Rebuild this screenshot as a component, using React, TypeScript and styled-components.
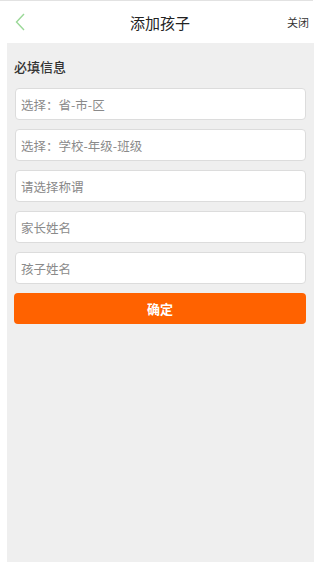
import React from 'react';
import styled, { createGlobalStyle } from 'styled-components';

const GlobalStyle = createGlobalStyle`
  html, body {
    margin: 0;
    padding: 0;
    background: #fff;
    font-family: "Noto Sans CJK SC", "Liberation Sans", sans-serif;
  }
`

const Page = styled.div`
  width: 320px;
  min-height: 562px;
  display: flex;
  flex-direction: column;
  background: #fff;
`

const Header = styled.div`
  width: 313px;
  height: 42px;
  border-top: 1px solid #e2e2e2;
  display: grid;
  grid-template-columns: 64px 1fr 57px;
  align-items: center;
`

const Back = styled.div`
  padding-left: 15px;
  display: flex;
  align-items: center;
`

const Title = styled.div`
  text-align: center;
  font-size: 15px;
  color: #222;
`

const Close = styled.div`
  text-align: right;
  font-size: 11px;
  color: #333;
  padding-right: 4px;
`

const Panel = styled.div`
  margin: 0 6px 0 7px;
  min-height: 519px;
  background: #efefef;
  padding: 14px 8px 0 7px;
  box-sizing: border-box;
  display: flex;
  flex-direction: column;
`

const Section = styled.div`
  font-size: 13px;
  font-weight: 500;
  color: #333;
  line-height: 20px;
  margin-bottom: 11px;
`

const Fields = styled.div`
  display: flex;
  flex-direction: column;
  gap: 9px;
  padding-left: 1px;
`

const Field = styled.div`
  height: 32px;
  box-sizing: border-box;
  background: #fff;
  border: 1px solid #dcdcdc;
  border-radius: 4px;
  display: flex;
  align-items: center;
  padding-left: 5px;
  font-size: 12.5px;
  color: #8a8a8a;
`

const Submit = styled.div`
  margin-top: 9px;
  height: 31px;
  background: #ff6200;
  border-radius: 4px;
  color: #fff;
  font-size: 13px;
  font-weight: 700;
  display: flex;
  align-items: center;
  justify-content: center;
`

const fields = ['选择：省-市-区', '选择：学校-年级-班级', '请选择称谓', '家长姓名', '孩子姓名'];

export default function App() {
  return <Page>
    <GlobalStyle />
    <Header>
      <Back>
        <svg width="11" height="20" viewBox="0 0 11 20">
          <polyline points="9,2 1.5,10 9,18" fill="none" stroke="#9ad897" strokeWidth="1.4" />
        </svg>
      </Back>
      <Title>添加孩子</Title>
      <Close>关闭</Close>
    </Header>
    <Panel>
      <Section>必填信息</Section>
      <Fields>
        {fields.map((f, i) => <Field key={i}>{f}</Field>)}
      </Fields>
      <Submit>确定</Submit>
    </Panel>
  </Page>;
}
